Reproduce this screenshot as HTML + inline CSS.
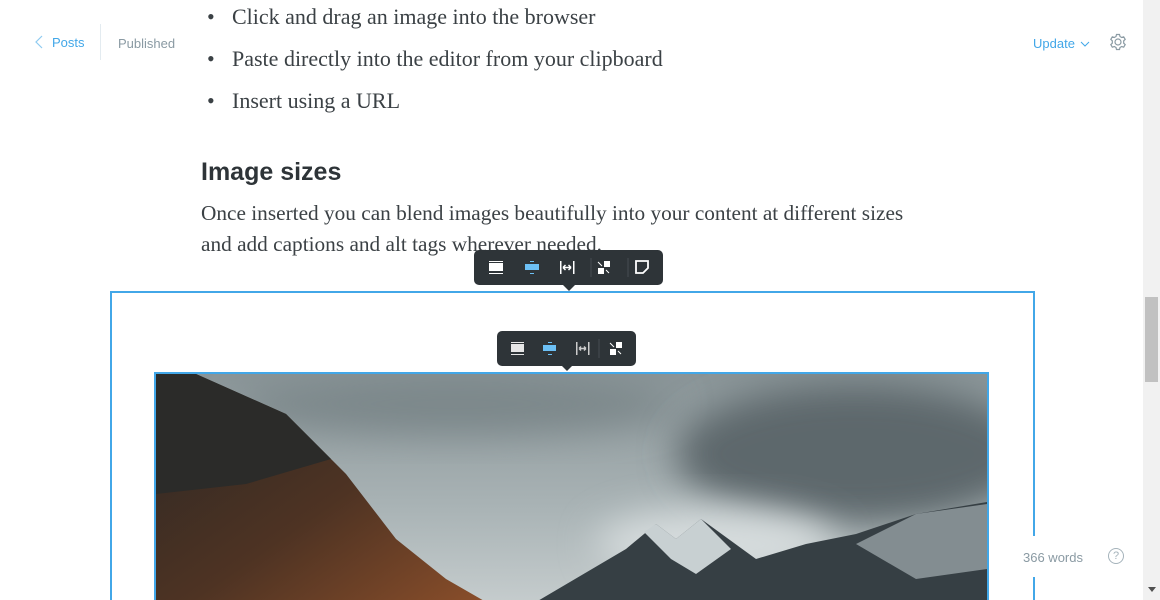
<!DOCTYPE html>
<html style="height:600px;overflow:hidden"><head><style>
body{margin:0;width:1160px;height:600px;overflow:hidden;background:#fff;position:relative;font-family:"Liberation Sans",sans-serif}
.a{position:absolute}
.serif{font-family:"Liberation Serif",serif;color:#3b4145;font-size:22px}
.tb{position:absolute;background:#2e3438;border-radius:5px;display:flex;align-items:center}
</style></head><body>
<div class="a serif" style="left:0;top:-4px;line-height:42px">
<div><span class="a" style="left:207px">•</span><span style="margin-left:232px">Click and drag an image into the browser</span></div>
<div><span class="a" style="left:207px">•</span><span style="margin-left:232px">Paste directly into the editor from your clipboard</span></div>
<div><span class="a" style="left:207px">•</span><span style="margin-left:232px">Insert using a URL</span></div>
</div>
<div class="a" style="left:201px;top:158px;font-size:25px;font-weight:bold;color:#2e3438">Image sizes</div>
<div class="a serif" style="left:201px;top:198px;line-height:31px;font-size:21.3px;width:736px">Once inserted you can blend images beautifully into your content at different sizes and add captions and alt tags wherever needed.</div>

<svg class="a" style="left:35px;top:35px" width="8" height="14"><path d="M7 1L1 7l6 6" fill="none" stroke="#8ecbf1" stroke-width="1.2"/></svg>
<div class="a" style="left:52px;top:35px;color:#42a7e8;font-size:13px">Posts</div>
<div class="a" style="left:100px;top:24px;width:1px;height:36px;background:#e3ebf0"></div>
<div class="a" style="left:118px;top:36px;color:#8a9aa3;font-size:13px">Published</div>
<div class="a" style="left:1033px;top:36px;color:#42a7e8;font-size:13px">Update</div>
<svg class="a" style="left:1080px;top:41px" width="10" height="6"><path d="M1 1l4 4 4-4" fill="none" stroke="#42a7e8" stroke-width="1"/></svg>
<svg class="a" style="left:1109px;top:33px" width="18" height="18" viewBox="0 0 18 18"><circle cx="9" cy="9" r="3" fill="none" stroke="#8a9aa3" stroke-width="1.2"/><path d="M7.5 1.5h3l.5 2 1.7 1 2-.7 1.5 2.6-1.5 1.4v2.4l1.5 1.4-1.5 2.6-2-.7-1.7 1-.5 2h-3l-.5-2-1.7-1-2 .7-1.5-2.6 1.5-1.4V7.8L1.8 6.4l1.5-2.6 2 .7 1.7-1z" fill="none" stroke="#8a9aa3" stroke-width="1.2"/></svg>

<div class="a" style="left:110px;top:291px;width:921px;height:320px;border:2px solid #42a7e8;box-sizing:content-box"></div>
<div class="a" style="left:154px;top:372px;width:831px;height:228px;border:2px solid #42a7e8;border-bottom:0;overflow:hidden">
<svg width="831" height="228" viewBox="0 0 831 228">
<defs><linearGradient id="s" x1="0" y1="0" x2="0" y2="1"><stop offset="0" stop-color="#8a9598"/><stop offset=".6" stop-color="#aab4b6"/><stop offset="1" stop-color="#c5cccd"/></linearGradient>
<linearGradient id="m" x1="0" y1="0" x2="1" y2="1"><stop offset="0" stop-color="#2a2724"/><stop offset=".55" stop-color="#4e3323"/><stop offset="1" stop-color="#8a4e2a"/></linearGradient>
<filter id="b" x="-50%" y="-50%" width="200%" height="200%"><feGaussianBlur stdDeviation="18"/></filter></defs>
<rect width="831" height="228" fill="url(#s)"/>
<ellipse cx="300" cy="30" rx="220" ry="30" fill="#7c878a" filter="url(#b)"/>
<ellipse cx="700" cy="80" rx="180" ry="70" fill="#5d686c" filter="url(#b)"/>
<ellipse cx="560" cy="170" rx="120" ry="35" fill="#d6dcdd" filter="url(#b)"/>
<polygon points="380,228 470,175 500,150 520,165 545,145 600,185 650,170 700,160 760,140 831,128 831,228" fill="#363f44"/>
<polygon points="488,158 500,150 520,165 545,145 575,175 540,200 515,185" fill="#c8d0d2"/>
<polygon points="700,170 760,140 831,130 831,195 760,205" fill="#b8c1c4" opacity=".6"/>
<polygon points="0,0 40,0 130,40 190,100 240,165 290,205 330,228 0,228" fill="url(#m)"/>
<polygon points="0,0 40,0 130,40 175,85 90,110 0,120" fill="#2b2b29"/>
</svg></div>

<div class="tb" style="left:474px;top:250px;width:189px;height:35px">
<svg width="189" height="35">
<g fill="#fff"><rect x="15" y="13" width="14" height="8"/><rect x="15" y="11" width="14" height="1"/><rect x="15" y="23" width="14" height="1"/></g>
<g fill="#6cc0f5"><rect x="51" y="14" width="14" height="6"/><rect x="56" y="11" width="4" height="1"/><rect x="56" y="23" width="4" height="1"/></g>
<g fill="#fff"><rect x="86" y="11" width="1.5" height="13"/><rect x="99" y="11" width="1.5" height="13"/><path d="M89 17.5h8M89 17.5l2.5-2.5M89 17.5l2.5 2.5M97 17.5l-2.5-2.5M97 17.5l-2.5 2.5" stroke="#fff" stroke-width="1.5"/></g>
<line x1="117" y1="8" x2="117" y2="27" stroke="#464d52"/>
<g fill="#fff"><rect x="130" y="11" width="6" height="6"/><rect x="124" y="18" width="6" height="6"/><path d="M124 12l4 4M132 20l3 3" stroke="#fff"/></g>
<line x1="154" y1="8" x2="154" y2="27" stroke="#464d52"/>
<path d="M162 11h12v7l-5 5h-7z" fill="none" stroke="#fff" stroke-width="1.8"/>
</svg></div>
<div class="a" style="left:563px;top:285px;border:6px solid transparent;border-top-color:#2e3438;border-bottom:0"></div>

<div class="tb" style="left:497px;top:331px;width:139px;height:35px">
<svg width="139" height="35">
<g fill="#e6e6e6"><rect x="14" y="13" width="13" height="8"/><rect x="14" y="11" width="13" height="1"/><rect x="14" y="23" width="13" height="1"/></g>
<g fill="#6cc0f5"><rect x="46" y="14" width="13" height="6"/><rect x="51" y="11" width="4" height="1"/><rect x="51" y="23" width="4" height="1"/></g>
<g fill="#ccc"><rect x="79" y="11" width="1.5" height="13"/><rect x="91" y="11" width="1.5" height="13"/><path d="M82 17.5h7M82 17.5l2-2M82 17.5l2 2M89 17.5l-2-2M89 17.5l-2 2" stroke="#ccc" stroke-width="1.5"/></g>
<line x1="102" y1="8" x2="102" y2="27" stroke="#464d52"/>
<g fill="#fff"><rect x="119" y="11" width="6" height="6"/><rect x="113" y="18" width="6" height="6"/><path d="M113 12l4 4M121 20l3 3" stroke="#fff"/></g>
</svg></div>
<div class="a" style="left:562px;top:366px;border:5px solid transparent;border-top-color:#2e3438;border-bottom:0"></div>

<div class="a" style="left:1007px;top:536px;width:136px;height:41px;background:#fff"></div>
<div class="a" style="left:1023px;top:550px;color:#8a9aa3;font-size:13px">366 words</div>
<div class="a" style="left:1108px;top:548px;width:14px;height:14px;border:1.3px solid #a5b3bb;border-radius:50%;color:#a5b3bb;font-size:11px;text-align:center;line-height:14px">?</div>

<div class="a" style="left:1143px;top:0;width:17px;height:600px;background:#f1f1f1"></div>
<div class="a" style="left:1145px;top:297px;width:13px;height:85px;background:#c1c1c1"></div>
<div class="a" style="left:1148px;top:587px;border:4px solid transparent;border-top:5px solid #505050;border-bottom:0"></div>
</body></html>
